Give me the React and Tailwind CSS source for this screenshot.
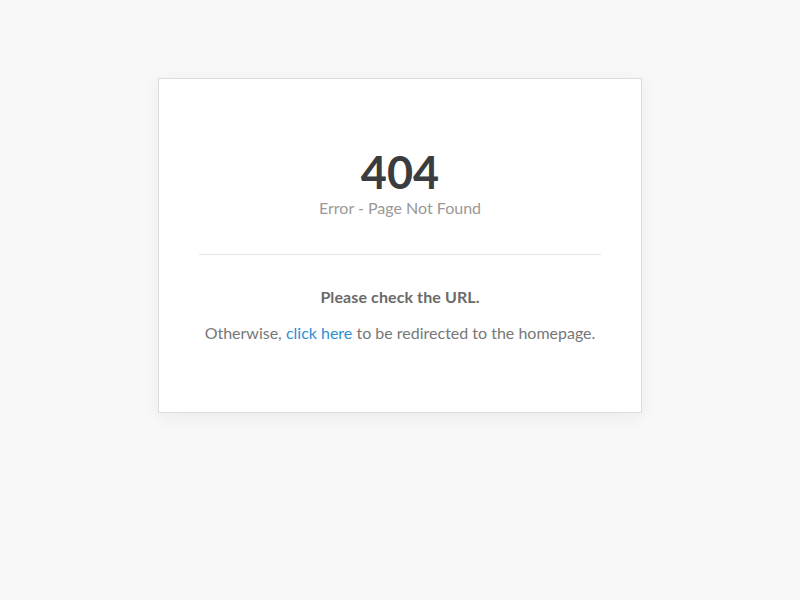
export default function App() {
  return (
    <div
      className="min-h-[600px] bg-[#f8f8f8] pt-[78px]"
      style={{ fontFamily: "Lato, 'Open Sans', sans-serif" }}
    >
      <div className="mx-auto w-[484px] h-[335px] bg-white border border-[#dcdcdc] shadow-[0_4px_18px_rgba(0,0,0,0.06)] px-10 pt-[68px]">
        {/* HEADER */}
        <div className="text-center">
          <h1 className="text-[45px] leading-[50px] font-bold text-[#3a3c3f]">404</h1>
          <p className="mt-[1px] text-[16px] leading-[20px] text-[#999]">
            Error - Page Not Found
          </p>
        </div>

        <hr className="mt-[36px] border-0 border-t border-[#e5e5e5]" />

        {/* MESSAGE */}
        <div className="text-center">
          <p className="mt-[32px] text-[16px] leading-[20px] font-bold tracking-[0.1px] text-[#6a6a6a]">
            Please check the URL.
          </p>
          <p className="mt-[16px] text-[16px] leading-[20px] text-[#777]">
            Otherwise,{" "}
            <a href="#" className="text-[#2b8fd3]">
              click here
            </a>{" "}
            to be redirected to the homepage.
          </p>
        </div>
      </div>
    </div>
  );
}
